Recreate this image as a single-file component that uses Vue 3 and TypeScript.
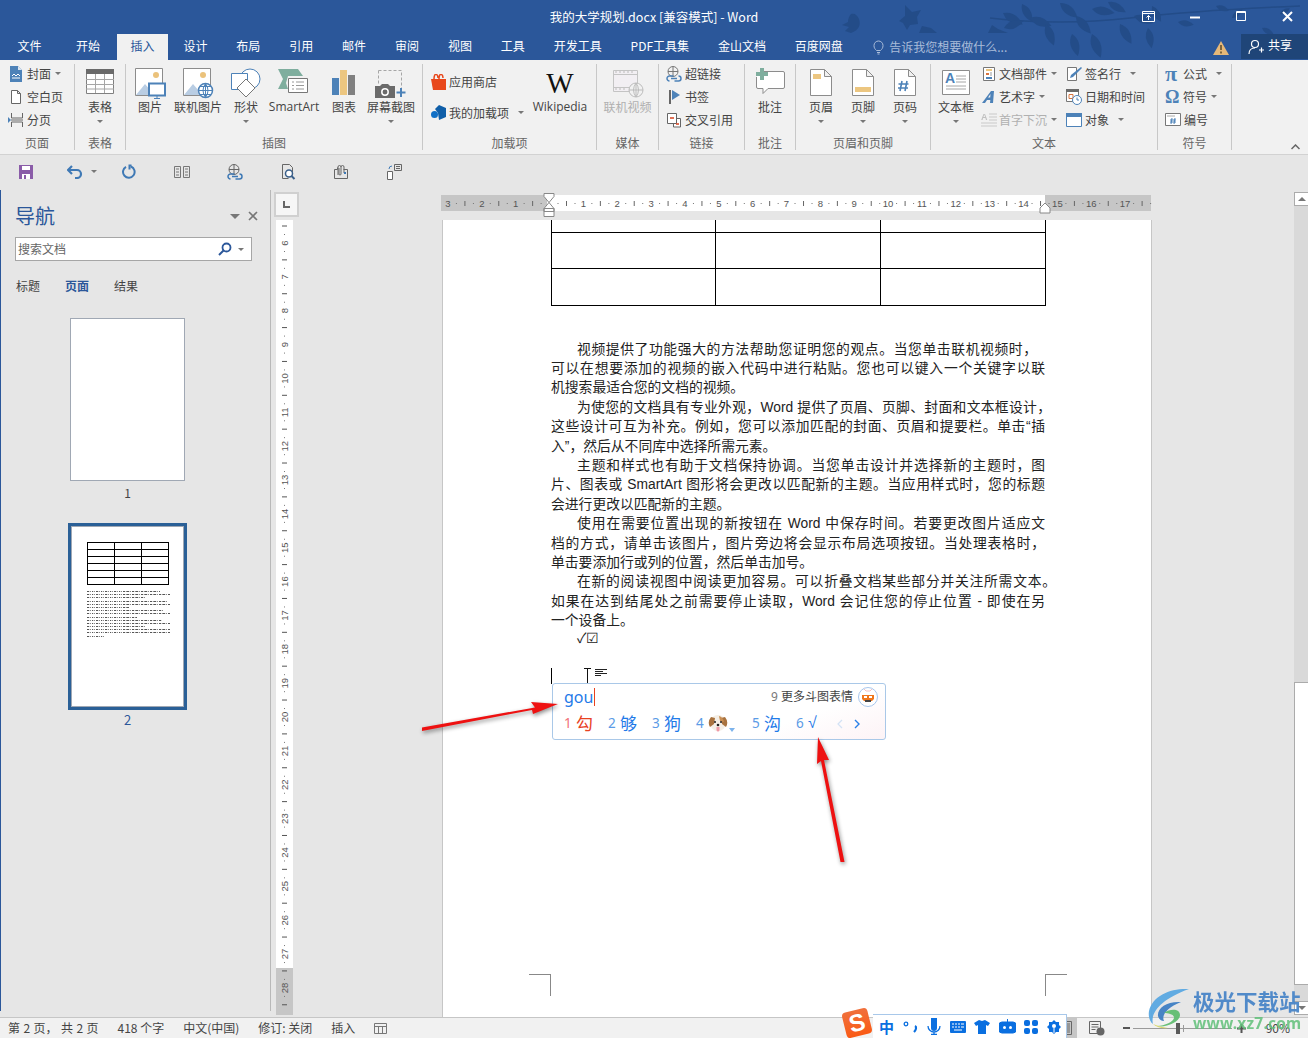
<script setup lang="ts">
const tabs = ['文件', '开始', '插入', '设计', '布局', '引用', '邮件', '审阅', '视图', '工具', '开发工具', 'PDF工具集', '金山文档', '百度网盘']

const CM = 33.86
const hNums = Array.from({ length: 21 }, (_, i) => i - 3)
const hx = (cm: number) => 108.5 + cm * CM
const vNums = Array.from({ length: 23 }, (_, i) => i + 6)
const vy = (cm: number) => 23 + (cm - 6) * CM

// x, y, angle, size of the leaves behind the title
const leaves = [
  [1003, 13, 30, 20], [1022, 4, 60, 18], [1030, 18, 20, 20], [1004, 28, -20, 18], [1046, 24, 70, 20],
  [1060, 3, 40, 20], [1076, 16, 50, 20], [1092, 9, 10, 20], [1072, 34, 75, 20], [1092, 34, 70, 22],
  [1108, 2, 30, 18], [1120, 24, 60, 20], [1148, 28, 80, 18], [1134, 16, 20, 18], [1152, 6, 60, 16],
  [1178, 22, 10, 14], [1216, 6, 20, 12], [1232, 18, -40, 12], [1262, 28, 30, 12], [1280, 14, -30, 10],
]

// the document's commas are full width
const cn = (s: string) => s.replace(/,/g, '\uFF0C')

// w: line width in px where a line does not fill the text column
const lines = [
  { t: '视频提供了功能强大的方法帮助您证明您的观点。当您单击联机视频时,', first: true, w: 486 },
  { t: '可以在想要添加的视频的嵌入代码中进行粘贴。您也可以键入一个关键字以联' },
  { t: '机搜索最适合您的文档的视频。', end: true },
  { t: '为使您的文档具有专业外观,Word 提供了页眉、页脚、封面和文本框设计,', first: true, w: 500 },
  { t: '这些设计可互为补充。例如,您可以添加匹配的封面、页眉和提要栏。单击“插' },
  { t: '入”,然后从不同库中选择所需元素。', end: true },
  { t: '主题和样式也有助于文档保持协调。当您单击设计并选择新的主题时,图', first: true },
  { t: '片、图表或 SmartArt 图形将会更改以匹配新的主题。当应用样式时,您的标题' },
  { t: '会进行更改以匹配新的主题。', end: true },
  { t: '使用在需要位置出现的新按钮在 Word 中保存时间。若要更改图片适应文', first: true },
  { t: '档的方式,请单击该图片,图片旁边将会显示布局选项按钮。当处理表格时,' },
  { t: '单击要添加行或列的位置,然后单击加号。', end: true },
  { t: '在新的阅读视图中阅读更加容易。可以折叠文档某些部分并关注所需文本。', first: true, w: 505 },
  { t: '如果在达到结尾处之前需要停止读取,Word 会记住您的停止位置 - 即使在另' },
  { t: '一个设备上。', end: true },
].map(l => ({ ...l, t: cn(l.t) }))

const pageCount = cn('第 2 页, 共 2 页')
const thumbText = [88, 100, 70, 96, 100, 50, 92, 100, 60, 90, 100, 70, 100, 100, 22]
const rows = ['r0', 'r1', 'r2']
</script>

<template>
  <div class="app">
    <div class="chrome">
      <svg class="deco" width="500" height="60" viewBox="840 0 500 60">
        <g fill="#234c88">
          <path d="M851 14c4-1 6 1 8 5 2 6 0 11-8 14l-6-2 4-4-7-2 6-3c0-3 1-6 3-8z" />
          <path d="M905 5l7 7 9-2-4 7 1 7-8 1-3 5-4-7-4-2 6-5z" />
          <path d="M922 26l9 2 6 5h-18z" />
          <path d="M992 25l6 4 10 4h-20z" />
          <path d="M990 18Q1060 26 1130 18T1300 6" fill="none" stroke="#234c88" stroke-width="1.500" />
          <path v-for="(l, i) in leaves" :key="i" d="M0 0Q7-6 16 0Q7 6 0 0z" :transform="`translate(${l[0]} ${l[1]}) rotate(${l[2]}) scale(${l[3] / 14})`" />
        </g>
      </svg>
      <header class="title">
        <span class="doc-name">我的大学规划.docx [兼容模式] - Word</span>
        <svg class="win-btn b1" width="14" height="12" viewBox="0 0 14 12"><path d="M.5.500h12v10H.5zM.5 2.500h12M6.500 9V4.500M4.500 6.500l2-2 2 2" fill="none" stroke="#fff" /></svg>
        <svg class="win-btn b2" width="10" height="3" viewBox="0 0 10 3"><path d="M0 1.500h10" stroke="#fff" stroke-width="2" /></svg>
        <svg class="win-btn b3" width="11" height="11" viewBox="0 0 11 11"><path d="M.5.500h9v9h-9zM.5 1.500h9" fill="none" stroke="#fff" /></svg>
        <svg class="win-btn b4" width="11" height="11" viewBox="0 0 11 11"><path d="M1 1l9 9M10 1l-9 9" stroke="#fff" stroke-width="2" /></svg>
      </header>

      <nav class="tabs">
        <span v-for="(t, i) in tabs" :key="t" class="tab" :class="{ on: i === 2, t0: i === 0, t1: i === 1 }">{{ t }}</span>
        <div class="tell">
          <svg width="11" height="15" viewBox="0 0 11 15"><path d="M3.500 10.500C2 9 1 8 1 5.500a4.500 4.500 0 019 0c0 2.500-1 3.500-2.500 5zM4 12.500h3M4.500 14h2" fill="none" stroke="#a9bcd9" /></svg>
          <span>告诉我您想要做什么...</span>
        </div>
        <svg class="warn" width="16" height="14" viewBox="0 0 16 14"><path d="M8 0l8 14H0z" fill="#e6b878" /><path d="M8 4v5M8 10.500v2" stroke="#5a4a2a" stroke-width="1.500" /></svg>
        <div class="share">
          <svg width="16" height="16" viewBox="0 0 16 16"><circle cx="7" cy="5" r="3.500" fill="none" stroke="#fff" stroke-width="1.200" /><path d="M1 15c0-4 2-6 6-6M11 11h5M13.500 8.500v5" fill="none" stroke="#fff" stroke-width="1.200" /></svg>
          <span>共享</span>
        </div>
      </nav>
    </div>

    <section class="ribbon">
      <div class="group g-page">
        <div class="body col small-col">
          <div class="row">
            <svg class="ic" width="16" height="16" viewBox="0 0 16 16"><path d="M2 0h8l4 4v12H2z" fill="#4d82b8" /><path d="M10 0l4 4h-4z" fill="#dce6f1" /><path d="M4 10l2-2 2 2 2-2 2 2M4 12h8" stroke="#fff" fill="none" /></svg>
            <span>封面</span><i class="caret" />
          </div>
          <div class="row">
            <svg class="ic" width="16" height="16" viewBox="0 0 16 16"><path d="M3.500 1.500h6l3 3v10h-9zM9.500 1.500v3h3" fill="#fff" stroke="#666" /></svg>
            <span>空白页</span>
          </div>
          <div class="row">
            <svg class="ic" width="16" height="16" viewBox="0 0 16 16"><path d="M3.500 1v5h11V1M3.500 15v-5h11v5M3 8h12" fill="none" stroke="#666" /><path d="M0 5l3 3-3 3z" fill="#4d82b8" /></svg>
            <span>分页</span>
          </div>
        </div>
        <div class="glabel">页面</div>
      </div>

      <div class="group g-table">
        <div class="body">
          <div class="big w50">
            <svg class="bi" width="32" height="32" viewBox="0 0 32 32"><path d="M2.500 2.500h27v24h-27z" fill="#fff" stroke="#808080" /><path d="M2 2h28v5H2z" fill="#6a6a6a" /><path d="M2 12.500h28M2 17.500h28M2 22h28M11.500 7v19M20.500 7v19" stroke="#a6a6a6" /></svg>
            <span>表格</span><i class="caret" />
          </div>
        </div>
        <div class="glabel">表格</div>
      </div>

      <div class="group g-illus">
        <div class="body">
          <div class="big w48">
            <svg class="bi" width="32" height="32" viewBox="0 0 32 32"><path d="M1.500 1.500h27v27h-27z" fill="#fff" stroke="#8c8c8c" /><circle cx="22" cy="8" r="3" fill="#ebc27b" /><path d="M2 28l9-11 6 7 2 4z" fill="#b9cde3" /><path d="M15 16.500h16v12H15z" fill="#fff" stroke="#4d82b8" stroke-width="2" /><path d="M23 29v2M20 31.500h6" stroke="#4d82b8" /></svg>
            <span>图片</span>
          </div>
          <div class="big w48">
            <svg class="bi" width="32" height="32" viewBox="0 0 32 32"><path d="M1.500 1.500h27v27h-27z" fill="#fff" stroke="#8c8c8c" /><circle cx="21" cy="8" r="3" fill="#ebc27b" /><path d="M2 28l9-11 6 7 2 4z" fill="#b9cde3" /><circle cx="23.500" cy="23.500" r="7" fill="#fff" stroke="#4d82b8" stroke-width="1.500" /><path d="M16.500 23.500h14M23.500 16.500v14M18 19.500h11M18 27.500h11M23.500 16.500q-5 7 0 14q5-7 0-14" fill="none" stroke="#4d82b8" /></svg>
            <span>联机图片</span>
          </div>
          <div class="big w48">
            <svg class="bi" width="32" height="32" viewBox="0 0 32 32"><circle cx="20" cy="12" r="10" fill="#fff" stroke="#4d82b8" /><path d="M1.500 6.500h16v16h-16z" fill="#fff" stroke="#4d82b8" /><path d="M16 12l9 9-9 9-9-9z" fill="#fff" stroke="#777" /></svg>
            <span>形状</span><i class="caret" />
          </div>
          <div class="big w48 latin">
            <svg class="bi" width="32" height="32" viewBox="0 0 32 32"><path d="M0 2h20l5 7H10l-2 7 2 6H0l5-10z" fill="#7fae9e" /><path d="M10.500 11.500h19v14h-19z" fill="#fff" stroke="#777" /><path d="M14 15h2M18 15h8M14 18.500h2M18 18.500h8M14 22h2M18 22h8" stroke="#999" /></svg>
            <span>SmartArt</span>
          </div>
          <div class="big w52">
            <svg class="bi" width="32" height="32" viewBox="0 0 32 32"><path d="M4 11h7v17H4z" fill="#4d82b8" /><path d="M12 3h7v25h-7z" fill="#ecc680" /><path d="M20 8h7v20h-7z" fill="#808080" /></svg>
            <span>图表</span>
          </div>
          <div class="big w42">
            <svg class="bi" width="32" height="32" viewBox="0 0 32 32"><path d="M3.500 3.500h23v23" fill="none" stroke="#a6a6a6" stroke-dasharray="3 2" /><path d="M3.500 3.500v14" fill="none" stroke="#a6a6a6" stroke-dasharray="3 2" /><path d="M0 19h5l2-2h6l2 2h5v12H0z" fill="#6a6a6a" /><circle cx="10" cy="25" r="3.200" fill="none" stroke="#fff" stroke-width="1.500" /><path d="M26 21v9M21.500 25.500h9" stroke="#4d82b8" stroke-width="2" /></svg>
            <span>屏幕截图</span><i class="caret" />
          </div>
        </div>
        <div class="glabel">插图</div>
      </div>

      <div class="group g-addin">
        <div class="body">
          <div class="col addin-col">
            <div class="row tall">
              <svg class="ic14" width="15" height="16" viewBox="0 0 15 16"><path d="M0 5h15v11H2z" fill="#e8471b" /><path d="M3 5c0-7 4-5 4-1M8 5c0-7 4-5 4-1" fill="none" stroke="#e8471b" stroke-width="1.500" /></svg>
              <span>应用商店</span>
            </div>
            <div class="row tall">
              <svg class="ic14" width="15" height="16" viewBox="0 0 15 16"><path d="M8 0l7 3v9l-7 3-1-7-3-4z" fill="#0f5ea8" /><circle cx="3.500" cy="9.500" r="3.500" fill="#0f6fc6" /></svg>
              <span>我的加载项</span><i class="caret far" />
            </div>
          </div>
          <div class="big w58 latin">
            <span class="wiki-w">W</span>
            <span>Wikipedia</span>
          </div>
        </div>
        <div class="glabel">加载项</div>
      </div>

      <div class="group g-media">
        <div class="body">
          <div class="big w61 off">
            <svg class="bi" width="32" height="32" viewBox="0 0 32 32" opacity=".5"><path d="M1.500 3.500h24v21h-24z" fill="#f4eef6" stroke="#999" /><path d="M2 7.500h23M2 20.500h23" stroke="#999" /><path d="M3 5h2M7 5h2M11 5h2M15 5h2M19 5h2M3 22h2M7 22h2M11 22h2" stroke="#888" /><circle cx="24" cy="23" r="7" fill="#f1f1f1" stroke="#888" /><path d="M17 23h14M24 16v14M24 16q-5 7 0 14q5-7 0-14" fill="none" stroke="#888" /></svg>
            <span>联机视频</span>
          </div>
        </div>
        <div class="glabel">媒体</div>
      </div>

      <div class="group g-link">
        <div class="body col small-col">
          <div class="row">
            <svg class="ic" width="16" height="16" viewBox="0 0 16 16"><circle cx="7" cy="5.500" r="5" fill="none" stroke="#777" /><path d="M2 5.500h10M7 .5v10" stroke="#777" /><path d="M1 12.500a2.500 2.500 0 012.500-2.500h4M15 12.500A2.500 2.500 0 0112.500 15h-4M3.500 15A2.500 2.500 0 011 12.500M12.500 10a2.500 2.500 0 012.500 2.500M5 12.500h6" fill="none" stroke="#4d82b8" stroke-width="1.500" /></svg>
            <span>超链接</span>
          </div>
          <div class="row">
            <svg class="ic" width="16" height="16" viewBox="0 0 16 16"><path d="M4 1v14" stroke="#666" stroke-width="2" /><path d="M6 1l8 5-8 5z" fill="#4d82b8" /></svg>
            <span>书签</span>
          </div>
          <div class="row">
            <svg class="ic" width="16" height="16" viewBox="0 0 16 16"><path d="M1.500 1.500h9v10h-9zM11 6.500h3.500v8.500h-7v-3" fill="#fff" stroke="#666" /><path d="M4 6h4M10 12h3" stroke="#d8431f" stroke-width="1.500" /></svg>
            <span>交叉引用</span>
          </div>
        </div>
        <div class="glabel">链接</div>
      </div>

      <div class="group g-note">
        <div class="body">
          <div class="big w50">
            <svg class="bi" width="32" height="32" viewBox="0 0 32 32"><path d="M6 4.500h23a1.500 1.500 0 011.500 1.500v14a1.500 1.500 0 01-1.500 1.500H14l-5 5v-5H4a1.500 1.500 0 01-1.500-1.500V10" fill="#fff" stroke="#8c8c8c" /><path d="M6 1h4v4h4v4h-4v4H6V9H2V5h4z" fill="#7fae9e" /></svg>
            <span>批注</span>
          </div>
        </div>
        <div class="glabel">批注</div>
      </div>

      <div class="group g-hf">
        <div class="body">
          <div class="big w42">
            <svg class="bi" width="32" height="32" viewBox="0 0 32 32"><path d="M5.500 2.500h14l7 7v19h-21zM19.500 2.500v7h7" fill="#fff" stroke="#8c8c8c" /><path d="M8 7h8v5H8z" fill="#ecc680" /></svg>
            <span>页眉</span><i class="caret" />
          </div>
          <div class="big w42">
            <svg class="bi" width="32" height="32" viewBox="0 0 32 32"><path d="M5.500 2.500h14l7 7v19h-21zM19.500 2.500v7h7" fill="#fff" stroke="#8c8c8c" /><path d="M8 20h16v5H8z" fill="#ecc680" /></svg>
            <span>页脚</span><i class="caret" />
          </div>
          <div class="big w42">
            <svg class="bi" width="32" height="32" viewBox="0 0 32 32"><path d="M5.500 2.500h14l7 7v19h-21zM19.500 2.500v7h7" fill="#fff" stroke="#8c8c8c" /><path d="M13 14l-2 10M18 14l-2 10M9.500 17h10M9 21h10" stroke="#4d82b8" stroke-width="1.600" /></svg>
            <span>页码</span><i class="caret" />
          </div>
        </div>
        <div class="glabel">页眉和页脚</div>
      </div>

      <div class="group g-text">
        <div class="body">
          <div class="big w50">
            <svg class="bi" width="32" height="32" viewBox="0 0 32 32"><path d="M2.500 3.500h27v24h-27z" fill="#fff" stroke="#8c8c8c" /><path d="M16 9h10M16 12h10M16 15h10M6 19h20M6 22h20" stroke="#a6a6a6" /><text x="5" y="16" class="icon-a">A</text></svg>
            <span>文本框</span><i class="caret" />
          </div>
          <div class="col small-col c1">
            <div class="row">
              <svg class="ic" width="16" height="16" viewBox="0 0 16 16"><path d="M2.500 1.500h11v13h-11z" fill="#fff" stroke="#777" /><path d="M5 4h6" stroke="#ecc680" stroke-width="2" /><path d="M5 7h3v2H5z" fill="#d8743f" /><path d="M9 7h2M9 9h2" stroke="#999" /><path d="M5 12h6" stroke="#4d82b8" stroke-width="2" /></svg>
              <span>文档部件</span><i class="caret" />
            </div>
            <div class="row">
              <svg class="ic" width="16" height="16" viewBox="0 0 16 16"><path d="M10 2h3l-1 12h-3l.3-3H6l-2 3H1zM9.500 5L7 8.500h2.200z" fill="#4d82b8" fill-rule="evenodd" /></svg>
              <span>艺术字</span><i class="caret" />
            </div>
            <div class="row off">
              <svg class="ic" width="16" height="16" viewBox="0 0 16 16" opacity=".55"><text x="0" y="8" class="icon-a2">A</text><path d="M8 2h8M8 5h8M8 8h8M0 11h16M0 14h16" stroke="#aaa" /></svg>
              <span>首字下沉</span><i class="caret" />
            </div>
          </div>
          <div class="col small-col c2">
            <div class="row">
              <svg class="ic" width="16" height="16" viewBox="0 0 16 16"><path d="M1.500 1.500h9v13h-9z" fill="#fff" stroke="#777" /><path d="M15 1l1 1-9 9-3 1 1-3z" fill="#4d82b8" /></svg>
              <span>签名行</span><i class="caret far2" />
            </div>
            <div class="row">
              <svg class="ic" width="16" height="16" viewBox="0 0 16 16"><path d="M.5.500h12v12H.5z" fill="#fff" stroke="#777" /><path d="M0 0h13v3H0z" fill="#6a6a6a" /><path d="M3 5.500h4v4H3z" fill="none" stroke="#d8743f" /><circle cx="11" cy="11" r="4.500" fill="#fff" stroke="#4d82b8" /><path d="M11 8.500V11h2" fill="none" stroke="#4d82b8" /></svg>
              <span>日期和时间</span>
            </div>
            <div class="row">
              <svg class="ic" width="16" height="16" viewBox="0 0 16 16"><path d="M.5 1.500h15v13H.5z" fill="#fff" stroke="#4d82b8" /><path d="M0 1h16v4H0z" fill="#4d82b8" /></svg>
              <span>对象</span><i class="caret far2" />
            </div>
          </div>
        </div>
        <div class="glabel">文本</div>
      </div>

      <div class="group g-sym">
        <div class="body col small-col">
          <div class="row">
            <span class="sym-glyph">π</span>
            <span>公式</span><i class="caret far3" />
          </div>
          <div class="row">
            <span class="sym-glyph omega">Ω</span>
            <span>符号</span><i class="caret" />
          </div>
          <div class="row">
            <svg class="ic" width="16" height="14" viewBox="0 0 16 14"><path d="M.5.500h15v12H.5z" fill="#fff" stroke="#777" /><path d="M2 3h8" stroke="#aaa" /><path d="M7 5l-1 6M10 5l-1 6M5 7h6M5 9h6" stroke="#4d82b8" /></svg>
            <span>编号</span>
          </div>
        </div>
        <div class="glabel">符号</div>
      </div>

      <svg class="collapse" width="9" height="6" viewBox="0 0 9 6"><path d="M.5 5l4-4 4 4" fill="none" stroke="#666" stroke-width="1.500" /></svg>
    </section>

    <div class="qat">
      <svg width="16" height="16" viewBox="0 0 16 16"><path d="M1 1h14v14H1z" fill="#8a5ca8" /><path d="M4 2h8v4H4z" fill="#fff" /><path d="M4 10h8v5H4z" fill="#fff" /><path d="M6 11h2v4H6z" fill="#8a5ca8" /></svg>
      <svg class="q-undo" width="16" height="14" viewBox="0 0 16 14"><path d="M5 1L1 5l4 4M1 5h9a4 4 0 010 8H8" fill="none" stroke="#3f79b5" stroke-width="2.200" /></svg>
      <i class="caret q-caret" />
      <svg class="q-redo" width="15" height="15" viewBox="0 0 15 15"><path d="M9.500 1.500h-2v4M9 2.500a5.800 5.800 0 11-5 .3" fill="none" stroke="#3f79b5" stroke-width="2" /></svg>
      <svg class="q" width="16" height="12" viewBox="0 0 16 12"><path d="M.5.500h6v11h-6zM9.500.5h6v11h-6zM2 3h3M2 6h3M2 9h3M11 3h3M11 6h3M11 9h3" fill="none" stroke="#777" /></svg>
      <svg class="q" width="16" height="16" viewBox="0 0 16 16"><circle cx="7" cy="5.500" r="5" fill="none" stroke="#666" /><path d="M2 5.500h10M7 .5v10" stroke="#666" /><path d="M1 12.500a2.500 2.500 0 012.500-2.500h4M15 12.500A2.500 2.500 0 0112.500 15h-4M3.500 15A2.500 2.500 0 011 12.500M12.500 10a2.500 2.500 0 012.500 2.500M5 12.500h6" fill="none" stroke="#3f79b5" stroke-width="1.500" /></svg>
      <svg class="q" width="16" height="16" viewBox="0 0 16 16"><path d="M2.500.5h7l3 3v5M2.500.5v14h6" fill="none" stroke="#666" /><circle cx="9" cy="9.500" r="3.500" fill="#fff" stroke="#3a5f8a" stroke-width="1.500" /><path d="M11.500 12l3 3" stroke="#3a5f8a" stroke-width="2" /></svg>
      <svg class="q" width="16" height="16" viewBox="0 0 16 16"><path d="M1.500 5.500h3v-2M10.500 5.500h4v9h-13v-9" fill="none" stroke="#666" /><path d="M5 11V3a1.500 1.500 0 013 0v7a.7.7 0 01-2 0V4M8 3a1.500 1.500 0 013 0v6" fill="none" stroke="#666" /><path d="M11 8h2v2h-2z" fill="#3f79b5" /></svg>
      <svg class="q" width="16" height="16" viewBox="0 0 16 16"><path d="M1.500 7.500h5v8h-5z" fill="#fff" stroke="#666" /><path d="M8.500.5h7v6h-7zM10 2.500h4M10 4.500h4" fill="none" stroke="#666" /><path d="M3 5a3 3 0 013-3" fill="none" stroke="#3f79b5" /></svg>
    </div>

    <main class="workspace">
      <aside class="nav">
        <div class="nav-head">
          <span class="nav-title">导航</span>
          <i class="caret nav-caret" />
          <svg class="nav-x" width="10" height="10" viewBox="0 0 10 10"><path d="M1 1l8 8M9 1L1 9" stroke="#777" stroke-width="1.600" /></svg>
        </div>
        <div class="nav-search">
          <span>搜索文档</span>
          <svg class="mag" width="14" height="14" viewBox="0 0 14 14"><circle cx="8.500" cy="5.500" r="4" fill="none" stroke="#2b579a" stroke-width="1.800" /><path d="M5.500 8.500L1 13" stroke="#2b579a" stroke-width="2" /></svg>
          <i class="caret" />
        </div>
        <div class="nav-tabs">
          <span>标题</span>
          <span class="cur">页面</span>
          <span>结果</span>
        </div>
        <div class="pages">
          <div class="thumb" />
          <div class="pnum">1</div>
          <div class="thumb sel">
            <div class="mini">
              <div class="mini-grid">
                <i v-for="n in 18" :key="n" />
              </div>
              <div class="mini-text">
                <i v-for="(w, n) in thumbText" :key="n" :style="{ width: w + '%' }" />
              </div>
            </div>
          </div>
          <div class="pnum cur">2</div>
        </div>
      </aside>

      <div class="vruler">
        <div class="corner"><b /></div>
        <svg class="vr-svg" width="17" height="795" viewBox="0 0 17 795">
          <rect width="17" height="748" fill="#fff" />
          <rect y="748" width="17" height="47" fill="#c6c6c6" />
          <g v-for="n in vNums" :key="n">
            <text :transform="`translate(12 ${vy(n)}) rotate(-90)`" text-anchor="middle" class="rtxt">{{ n }}</text>
            <path :d="`M6 ${vy(n) - 17}h5`" stroke="#555" />
            <path :d="`M8 ${vy(n) - 8.500}h1M8 ${vy(n) + 8.500}h1`" stroke="#777" />
          </g>
          <path :d="`M6 ${vy(29) - 17}h5`" stroke="#555" />
        </svg>
      </div>

      <div class="doc">
        <svg class="hruler" width="720" height="30" viewBox="0 0 720 30">
          <rect y="2" width="710" height="16" fill="#fff" />
          <rect y="2" width="106" height="16" fill="#c6c6c6" />
          <rect x="604" y="2" width="106" height="16" fill="#c6c6c6" />
          <g v-for="n in hNums" :key="n">
            <text v-if="n !== 0" :x="hx(n)" y="13.500" text-anchor="middle" class="rtxt">{{ Math.abs(n) }}</text>
            <path :d="`M${hx(n) + 17} 8v5`" stroke="#666" />
            <path :d="`M${hx(n) + 8.500} 10v1M${hx(n) + 25.500} 10v1`" stroke="#777" />
          </g>
          <path d="M103 .5h10v3l-5 6-5-6zM103 18.500v-3l5-6 5 6v3zM103 15.500h10v8h-10z" fill="#fff" stroke="#888" />
          <path d="M599 16l5-5 5 5v5h-10z" fill="#fff" stroke="#888" transform="translate(0 -1)" />
        </svg>
        <article class="page">
          <table class="doc-table">
            <tbody>
              <tr v-for="h in rows" :key="h" :class="h"><td /><td /><td /></tr>
            </tbody>
          </table>
          <div class="text">
            <div v-for="(l, i) in lines" :key="i" class="ln" :class="{ first: l.first, end: l.end }" :style="l.w ? { width: l.w + 'px' } : undefined">{{ l.t }}</div>
            <div class="ln first end check">✓☑</div>
          </div>
          <div class="cursor-row">
            <i class="caret-bar" />
            <svg class="ibeam" width="9" height="16" viewBox="0 0 9 16"><path d="M1 .5h7M1 15.500h7M4.500 1v14" fill="none" stroke="#111" /></svg>
            <svg class="para" width="12" height="8" viewBox="0 0 12 8"><path d="M0 .5h12M0 2.500h8M0 4.500h12M0 6.500h6" stroke="#222" /></svg>
          </div>
          <i class="mark ml" />
          <i class="mark mr" />
        </article>
      </div>

      <div class="scroll">
        <div class="sb-btn"><i class="up" /></div>
        <div class="sb-track t-a" />
        <div class="sb-thumb" />
        <div class="sb-track t-b" />
        <div class="sb-btn"><i class="down" /></div>
      </div>
    </main>

    <footer class="status">
      <span class="page-count">{{ pageCount }}</span>
      <span>418 个字</span>
      <span>中文(中国)</span>
      <span>修订: 关闭</span>
      <span>插入</span>
      <svg width="13" height="11" viewBox="0 0 13 11"><path d="M.5.500h12v10H.5zM.5 3.500h12M4.500 3.500v7M8.500 3.500v7" fill="none" stroke="#777" /></svg>
      <div class="st-right">
        <div class="view-on"><svg width="9" height="14" viewBox="0 0 9 14"><path d="M.5.500h8v13h-8zM2 3h5M2 5h5M2 7h5M2 9h5M2 11h5" fill="none" stroke="#666" /></svg></div>
        <svg class="web" width="16" height="15" viewBox="0 0 16 15"><path d="M.5.500h11v12H.5zM2.500 3.500h7M2.500 6h7M2.500 8.500h4" fill="none" stroke="#666" /><circle cx="11.500" cy="10.500" r="4" fill="#666" /></svg>
        <svg class="z-sign" width="7" height="2" viewBox="0 0 7 2"><path d="M0 1h7" stroke="#555" stroke-width="2" /></svg>
        <div class="slider"><i class="tk" /><i class="th" /></div>
        <svg class="z-sign" width="9" height="9" viewBox="0 0 9 9"><path d="M0 4.500h9M4.500 0v9" stroke="#555" stroke-width="2" /></svg>
        <span class="zoom-val">90%</span>
      </div>
    </footer>

    <!-- things that float over the window -->
    <div class="ime">
      <div class="ime-top">
        <span class="py">gou</span><i class="ime-cursor" />
        <span class="more"><em>9</em> 更多斗图表情</span>
        <svg class="ime-av" width="20" height="20" viewBox="0 0 20 20"><circle cx="10" cy="10" r="9.500" fill="#fff" stroke="#a7c6ec" /><path d="M4 8h12v4l-2 2H6l-2-2z" fill="#f0761b" /><path d="M7 13h6v2H7z" fill="#444" /><path d="M6 9h3v2H6zM11 9h3v2h-3z" fill="#fff" /><path d="M6 2l2 2h4l2-2" fill="none" stroke="#f3c1c1" /></svg>
      </div>
      <div class="ime-cands">
        <span class="cand hot"><em>1</em>勾</span>
        <span class="cand"><em>2</em>够</span>
        <span class="cand"><em>3</em>狗</span>
        <span class="cand"><em>4</em>
          <svg class="dog" width="20" height="20" viewBox="0 0 20 20"><circle cx="10" cy="10" r="8" fill="#f5efe6" /><path d="M3 4q-4 5-1 10l4-3 1-6zM17 4q4 5 1 10l-4-3-1-6z" fill="#a9733f" /><path d="M11 3q4 1 5 6l-4-1z" fill="#c98f55" /><circle cx="7" cy="9" r="1" fill="#222" /><circle cx="13" cy="9" r="1" fill="#222" /><circle cx="10" cy="12" r="1.300" fill="#222" /><path d="M8.500 14h3v3a1.500 1.500 0 01-3 0z" fill="#ef9aa5" /></svg>
          <i class="dog-more" />
        </span>
        <span class="cand"><em>5</em>沟</span>
        <span class="cand"><em>6</em><b class="root">√</b></span>
        <svg class="pager" width="26" height="10" viewBox="0 0 26 10"><path d="M5 1L1 5l4 4" fill="none" stroke="#d3e2f5" stroke-width="1.200" /><path d="M18 1l4 4-4 4" fill="none" stroke="#2a80e8" stroke-width="1.400" /></svg>
      </div>
    </div>

    <div class="sogou">
      <div class="s-logo"><span>S</span></div>
      <div class="s-bar">
        <b class="s-zh">中</b>
        <svg width="16" height="14" viewBox="0 0 16 14"><circle cx="3" cy="4" r="1.800" fill="none" stroke="#0a6fe0" stroke-width="1.300" /><path d="M12 6c2 1 1 4-1 6" fill="none" stroke="#0a6fe0" stroke-width="2.200" /></svg>
        <svg width="14" height="17" viewBox="0 0 14 17"><path d="M4 0h6v10a3 3 0 01-6 0z" fill="#0a6fe0" /><path d="M1 8a6 6 0 0012 0M7 14v3M4 16.500h6" fill="none" stroke="#0a6fe0" stroke-width="1.300" /></svg>
        <svg width="16" height="12" viewBox="0 0 16 12"><path d="M1 0h14a1 1 0 011 1v10a1 1 0 01-1 1H1a1 1 0 01-1-1V1a1 1 0 011-1z" fill="#0a6fe0" /><path d="M2 3h2M5 3h2M8 3h2M11 3h3M2 6h2M5 6h2M8 6h2M11 6h3M4 9h8" stroke="#fff" /></svg>
        <svg width="16" height="14" viewBox="0 0 16 14"><path d="M5 0l3 1 3-1 5 3-2 3-2-1v9H4V5L2 6 0 3z" fill="#0a6fe0" /></svg>
        <svg width="17" height="15" viewBox="0 0 17 15"><path d="M8.500 0v3M3 3h11a3 3 0 013 3v5a3 3 0 01-3 3H3a3 3 0 01-3-3V6a3 3 0 013-3z" fill="#0a6fe0" stroke="#0a6fe0" /><circle cx="5.500" cy="8.500" r="1.500" fill="#fff" /><circle cx="11.500" cy="8.500" r="1.500" fill="#fff" /></svg>
        <svg width="14" height="14" viewBox="0 0 14 14"><rect width="6" height="6" rx="2" fill="#0a6fe0" /><rect x="8" width="6" height="6" rx="2" fill="#0a6fe0" /><rect y="8" width="6" height="6" rx="2" fill="#0a6fe0" /><rect x="8" y="8" width="6" height="6" rx="2" fill="#0a6fe0" /></svg>
        <svg width="14" height="14" viewBox="0 0 14 14"><path d="M7 0l2 2 3 0 0 3 2 2-2 2 0 3-3 0-2 2-2-2-3 0 0-3-2-2 2-2 0-3 3 0z" fill="#0a6fe0" /><circle cx="7" cy="6" r="2" fill="#fff" /><path d="M7 8v5" stroke="#fff" /></svg>
      </div>
    </div>

    <div class="wm">
      <svg class="wm-logo" width="46" height="44" viewBox="0 0 46 44">
        <path d="M42 2C24 1 6 8 2 24c-1 6 1 11 4 13C3 26 14 12 42 2z" fill="#5aa8e2" />
        <path d="M34 15C20 14 10 21 11 29c1 4 4 5 6 5-3-6 4-14 17-19z" fill="#3f7fc4" />
        <path d="M17 26c7-5 16-4 16 2 0 7-14 13-23 11 8 0 18-5 17-9-1-3-6-4-10-4z" fill="#62bd72" />
        <path d="M6 37c3 3 9 5 15 4-5-1-11-2-15-4z" fill="#d8d86a" />
      </svg>
      <div class="wm-text">
        <strong>极光下载站</strong>
        <span>www.xz7.com</span>
      </div>
    </div>

    <svg class="arrows" width="1308" height="1038" viewBox="0 0 1308 1038">
      <g fill="#ee1111" class="arrow-g">
        <path d="M422 727.500L535 707.500l-4-5.500 27 2-25 10-1-4L422 731z" />
        <path d="M844.500 862L824 760l5 0-11-23-1 27 4-3L840.500 862z" />
      </g>
    </svg>
  </div>
</template>

<style scoped>
.app {
  position: relative;
  width: 1308px;
  height: 1038px;
  overflow: hidden;
  display: flex;
  flex-direction: column;
  background: #e6e6e6;
  color: #444;
  font: 12px/16px "Noto Sans CJK SC", "Noto Sans", sans-serif;
}
i { display: block; font-style: normal; }
em { font-style: normal; }

/* title + tabs */
.chrome {
  position: relative;
  flex: none;
  height: 60px;
  background: #2b579a;
  overflow: hidden;
}
.deco { position: absolute; left: 840px; top: 0; }
.title {
  position: relative;
  height: 34px;
  display: flex;
  align-items: center;
  justify-content: center;
  color: #fff;
}
.doc-name { position: relative; font-size: 12.500px; }
.win-btn { position: absolute; }
.b1 { left: 1142px; top: 11px; }
.b2 { left: 1190px; top: 16px; }
.b3 { left: 1236px; top: 11px; }
.b4 { left: 1282px; top: 11px; }

.tabs {
  position: relative;
  height: 26px;
  display: flex;
  color: #fff;
}
.tab { padding: 4px 14.450px 0; white-space: nowrap; }
.t0 { width: 59px; padding: 4px 0 0; text-align: center; }
.t1 { width: 58px; padding: 4px 0 0; text-align: center; }
.tab.on { width: 51px; padding: 4px 0 0; text-align: center; background: #f1f1f1; color: #2b579a; margin-right: 1px; }
.tell {
  margin-left: 16px;
  display: flex;
  align-items: center;
  gap: 5px;
  color: #a9bcd9;
  font-size: 12px;
}
.warn { position: absolute; left: 1213px; top: 7px; }
.share {
  position: absolute;
  right: 0;
  top: 0;
  width: 67px;
  height: 25px;
  padding-left: 7px;
  box-sizing: border-box;
  background: #1f4578;
  display: flex;
  align-items: center;
  gap: 4px;
}
.share span { margin-top: -3px; }

/* ribbon */
.ribbon {
  position: relative;
  height: 95px;
  flex: none;
  box-sizing: border-box;
  display: flex;
  align-items: flex-start;
  background: #f1f1f1;
  border-bottom: 1px solid #d2d2d2;
}
.group {
  height: 86px;
  margin-top: 4px;
  box-sizing: border-box;
  border-right: 1px solid #c8c8c8;
  display: flex;
  flex-direction: column;
}
.g-page { width: 75px; }
.g-table { width: 51px; }
.g-illus { width: 297px; }
.g-addin { width: 174px; }
.g-media { width: 62px; }
.g-link { width: 86px; }
.g-note { width: 51px; }
.g-hf { width: 135px; }
.g-text { width: 227px; }
.g-sym { width: 74px; }
.body { height: 72px; flex: none; display: flex; }
.body.col, .col { flex-direction: column; display: flex; }
.body.small-col { margin-bottom: 2px; }
.glabel { height: 14px; line-height: 14px; text-align: center; color: #666; }
.big {
  flex: none;
  display: flex;
  flex-direction: column;
  align-items: center;
  padding-top: 3px;
  white-space: nowrap;
}
.bi { flex: none; }
.w42 { width: 42px; }
.w48 { width: 48px; }
.w50 { width: 50px; }
.w52 { width: 52px; }
.w58 { width: 58px; }
.w61 { width: 61px; }
.big .caret { margin-top: 5px; }
.latin { font-family: "Open Sans", "Noto Sans", sans-serif; }
.g-hf .body { padding-left: 4px; }
.off { color: #b0b0b0; }
.caret {
  width: 0;
  height: 0;
  border: 3px solid transparent;
  border-top: 3.500px solid #777;
  border-bottom: 0;
  flex: none;
}
.small-col { margin-top: -2px; }
.row { height: 23px; display: flex; align-items: center; white-space: nowrap; }
.row .caret { margin-left: 4px; }
.row .caret.far { margin-left: 9px; }
.row .caret.far2 { margin-left: 9px; }
.row .caret.far3 { margin-left: 9px; }
.ic { flex: none; margin: 0 3px 0 8px; }
.g-link .ic { margin-left: 7px; }
.g-sym .ic { margin-left: 7px; }
.tall { height: 31px; }
.addin-col { width: 108px; margin-top: 2px; }
.ic14 { flex: none; margin: 0 3px 0 8px; }
.wiki-w { font: 400 29px/32px "Liberation Serif", serif; color: #111; }
.c1 { width: 84px; }
.c1 .ic { margin: 0 2px 0 0; }
.c2 .ic { margin: 0 3px 0 1px; }
.icon-a { font: 700 14px "Liberation Sans", sans-serif; fill: #4d82b8; }
.icon-a2 { font: 700 9px "Liberation Sans", sans-serif; fill: #999; }
.sym-glyph {
  width: 18px;
  flex: none;
  margin: 0 0 0 7px;
  font: 700 22px/22px "Liberation Serif", serif;
  color: #4d82b8;
}
.sym-glyph.omega { font-size: 18px; }
.collapse { position: absolute; right: 8px; top: 84px; }

/* quick access row */
.qat {
  height: 35px;
  flex: none;
  box-sizing: border-box;
  padding: 0 0 2px 18px;
  display: flex;
  align-items: center;
}
.qat svg { flex: none; }
.q-undo { margin-left: 33px; }
.q-caret { margin-left: 8px; }
.q-redo { margin-left: 25px; }
.q { margin-left: 37px; }

/* body of the window */
.workspace { flex: 1; min-height: 0; display: flex; }
.nav {
  width: 271px;
  flex: none;
  box-sizing: border-box;
  border-left: 1px solid #2b579a;
  border-right: 1px solid #b8b8b8;
  margin-bottom: 6px;
  padding: 13px 0 0 14px;
}
.nav-head { display: flex; align-items: center; height: 26px; }
.nav-title { font-size: 20px; line-height: 26px; color: #2b579a; }
.nav-caret { margin-left: auto; border-width: 5px; border-top: 5.500px solid #777; }
.nav-x { margin: 0 12px 0 8px; }
.nav-search {
  width: 237px;
  height: 24px;
  margin-top: 8px;
  box-sizing: border-box;
  border: 1px solid #a6a6a6;
  background: #fff;
  display: flex;
  align-items: center;
  padding: 0 7px 0 2px;
  color: #666;
}
.mag { margin-left: auto; margin-right: 6px; }
.nav-tabs { display: flex; gap: 25px; margin: 16px 0 0 1px; height: 18px; line-height: 18px; }
.nav-tabs .cur { color: #2b579a; font-weight: 700; }
.pages { width: 225px; margin-top: 23px; display: flex; flex-direction: column; align-items: center; }
.thumb {
  width: 115px;
  height: 163px;
  box-sizing: border-box;
  background: #fff;
  border: 1px solid #a0a8b4;
}
.thumb.sel { width: 119px; height: 187px; margin-top: 22px; border: 3px solid #2b6097; outline: 1px solid #a0a8b4; outline-offset: -4px; }
.pnum { margin-top: 4px; text-align: center; }
.pnum.cur { margin-top: 2px; color: #2b579a; font-size: 13px; }
.mini { padding: 16px 14px 0 16px; }
.mini-grid {
  display: grid;
  grid-template-columns: repeat(3, 27px);
  grid-auto-rows: 7px;
  border-top: 1px solid #000;
  border-left: 1px solid #000;
  width: 82px;
  box-sizing: border-box;
  background: #fff;
}
.mini-grid i { border-right: 1px solid #000; border-bottom: 1px solid #000; }
.mini-text { margin-top: 6px; display: flex; flex-direction: column; gap: 2.200px; }
.mini-text i {
  height: 1px;
  background: repeating-linear-gradient(90deg, #555 0 1.500px, #ddd 1.500px 2.500px, #888 2.500px 3.500px, #fff 3.500px 4.500px);
}

.vruler { width: 28px; flex: none; }
.corner {
  width: 21px;
  height: 21px;
  margin: 2px 0 0 3px;
  border: 2px solid #d0d0d0;
  background: #f6f6f6;
  display: flex;
  align-items: center;
  justify-content: center;
}
.corner b { width: 7px; height: 7px; border-left: 2px solid #666; border-bottom: 2px solid #666; box-sizing: border-box; }
.vr-svg { display: block; margin: 3px 0 0 5px; }
.rtxt { font: 9.500px "Liberation Sans", sans-serif; fill: #555; }

.doc { flex: 1; min-width: 0; overflow: hidden; display: flex; flex-direction: column; }
.hruler { display: block; flex: none; height: 30px; margin: 3px 0 -3px 142px; overflow: visible; }
.page {
  position: relative;
  flex: 1;
  width: 708px;
  margin-left: 144px;
  box-sizing: border-box;
  background: #fff;
  box-shadow: -1px 0 0 #c6c6c6, 1px 0 0 #c6c6c6;
  padding-left: 108px;
  color: #222;
  font-family: "Liberation Sans", "Noto Sans CJK SC", sans-serif;
}
.doc-table { width: 495px; margin-left: -.5px; border-collapse: collapse; table-layout: fixed; }
.doc-table td { border: 1px solid #000; padding: 0; }
.r0 { height: 12px; }
.r0 td { border-top: 0; }
.r1, .r2 { height: 36.500px; }
.text { margin-top: 34px; font-size: 13.800px; line-height: 19.400px; width: 494px; }
.ln { box-sizing: border-box; white-space: nowrap; text-align: justify; text-align-last: justify; }
.ln.first { padding-left: 26px; }
.ln.end { text-align-last: left; }
.check { margin-top: -2px; }
.cursor-row { position: relative; height: 16px; margin-top: 20px; }
.caret-bar { position: absolute; left: 0; top: 0; width: 1px; height: 16px; background: #000; }
.ibeam { position: absolute; left: 32px; top: 0; }
.para { position: absolute; left: 44px; top: 1px; }
.mark { position: absolute; width: 21px; height: 21px; top: 754px; }
.ml { left: 86px; border-top: 1px solid #888; border-right: 1px solid #888; }
.mr { left: 602px; border-top: 1px solid #888; border-left: 1px solid #888; }

.scroll { width: 14px; flex: none; padding-top: 2px; display: flex; flex-direction: column; }
.sb-btn {
  height: 14px;
  flex: none;
  box-sizing: border-box;
  border: 1px solid #ababab;
  border-right: 0;
  background: #fff;
  display: flex;
  align-items: center;
  justify-content: center;
}
.up { border: 4px solid transparent; border-top: 0; border-bottom: 4px solid #777; }
.down { border: 4px solid transparent; border-bottom: 0; border-top: 4px solid #777; }
.sb-track { background: #d9d9d9; }
.t-a { height: 476px; }
.t-b { height: 16px; }
.sb-thumb { height: 303px; box-sizing: border-box; background: #fff; border: 1px solid #ababab; border-right: 0; }

/* status bar */
.status {
  height: 21px;
  flex: none;
  box-sizing: border-box;
  border-top: 1px solid #c6c6c6;
  background: #f1f1f1;
  display: flex;
  align-items: center;
  gap: 19px;
  padding-left: 8px;
  white-space: nowrap;
}
.page-count { word-spacing: .75px; }
.st-right { margin-left: auto; display: flex; align-items: center; height: 100%; }
.view-on { width: 18px; height: 100%; background: #c6c6c6; display: flex; align-items: center; justify-content: center; margin-right: 12px; }
.web { margin-right: 18px; }
.z-sign { flex: none; }
.slider { position: relative; width: 99px; height: 1px; margin: 0 5px 0 3px; background: #9a9a9a; }
.tk { position: absolute; left: 50px; top: -3px; width: 1px; height: 7px; background: #9a9a9a; }
.th { position: absolute; left: 43px; top: -5px; width: 4px; height: 11px; background: #5a5a5a; }
.zoom-val { margin: 0 18px 0 20px; }

/* ime popup */
.ime {
  position: absolute;
  left: 552px;
  top: 683px;
  width: 334px;
  height: 57px;
  box-sizing: border-box;
  border: 1px solid #a9c8e8;
  border-radius: 3px;
  background: linear-gradient(160deg, #fff 70%, #fdf3f6 100%);
  padding: 0 11px;
  color: #1f7ae8;
  font-family: "Noto Sans", "Noto Sans CJK SC", sans-serif;
}
.ime-top { position: relative; height: 26px; display: flex; align-items: center; }
.py { font-size: 16px; }
.ime-cursor { width: 1px; height: 18px; background: #e8421f; margin-left: 1px; }
.more { margin-left: auto; margin-right: 21px; color: #444; font-size: 12px; }
.more em { color: #777; }
.ime-av { position: absolute; right: -4px; top: 3px; }
.ime-cands { position: relative; height: 26px; display: flex; align-items: center; font-size: 17px; font-family: "Noto Sans CJK SC", sans-serif; }
.cand { width: 44px; display: flex; align-items: center; flex: none; white-space: nowrap; }
.cand em { width: 12px; font: 13.500px "Noto Sans", sans-serif; color: #5b9be6; }
.cand.hot { color: #e8421f; }
.cand.hot em { color: #f2707a; }
.cand:nth-child(4) { width: 56px; position: relative; }
.root { font: 400 16px/20px "Liberation Sans", sans-serif; }
.dog { flex: none; }
.dog-more { position: absolute; left: 33px; top: 15px; border: 3px solid transparent; border-bottom: 0; border-top: 4px solid #7cb3ec; }
.pager { position: absolute; left: 273px; top: 9px; }

/* sogou toolbar */
.sogou { position: absolute; left: 841px; top: 1010px; width: 226px; height: 28px; }
.s-logo {
  position: absolute;
  left: 3px;
  top: 0;
  width: 26px;
  height: 26px;
  border-radius: 4px;
  background: linear-gradient(180deg, #f0703c, #fa5a14);
  transform: rotate(-14deg);
  display: flex;
  align-items: center;
  justify-content: center;
  color: #fff;
  font: 700 24px/26px "Liberation Sans", sans-serif;
}
.s-bar {
  position: absolute;
  left: 32px;
  top: 4px;
  width: 194px;
  height: 24px;
  box-sizing: border-box;
  background: #fff;
  border-top: 1px solid #a8c8ea;
  border-right: 1px solid #a8c8ea;
  display: flex;
  align-items: center;
  justify-content: space-between;
  padding: 0 5px 0 6px;
}
.s-zh { font-size: 15px; color: #0a6fe0; }

/* watermark */
.wm { position: absolute; left: 1147px; top: 987px; display: flex; opacity: .95; }
.wm-text { display: flex; flex-direction: column; margin-top: 1px; }
.wm-text strong { font-size: 21.500px; line-height: 26px; color: #4a86c8; white-space: nowrap; }
.wm-text span { font: 700 15.500px/18px "Noto Sans", sans-serif; color: #62c07a; letter-spacing: .2px; opacity: .9; }

.arrows { position: absolute; left: 0; top: 0; pointer-events: none; }
.arrow-g { filter: drop-shadow(1px 2px 2px rgba(0, 0, 0, .45)); }
</style>

<style>
html, body { margin: 0; padding: 0; }
</style>
